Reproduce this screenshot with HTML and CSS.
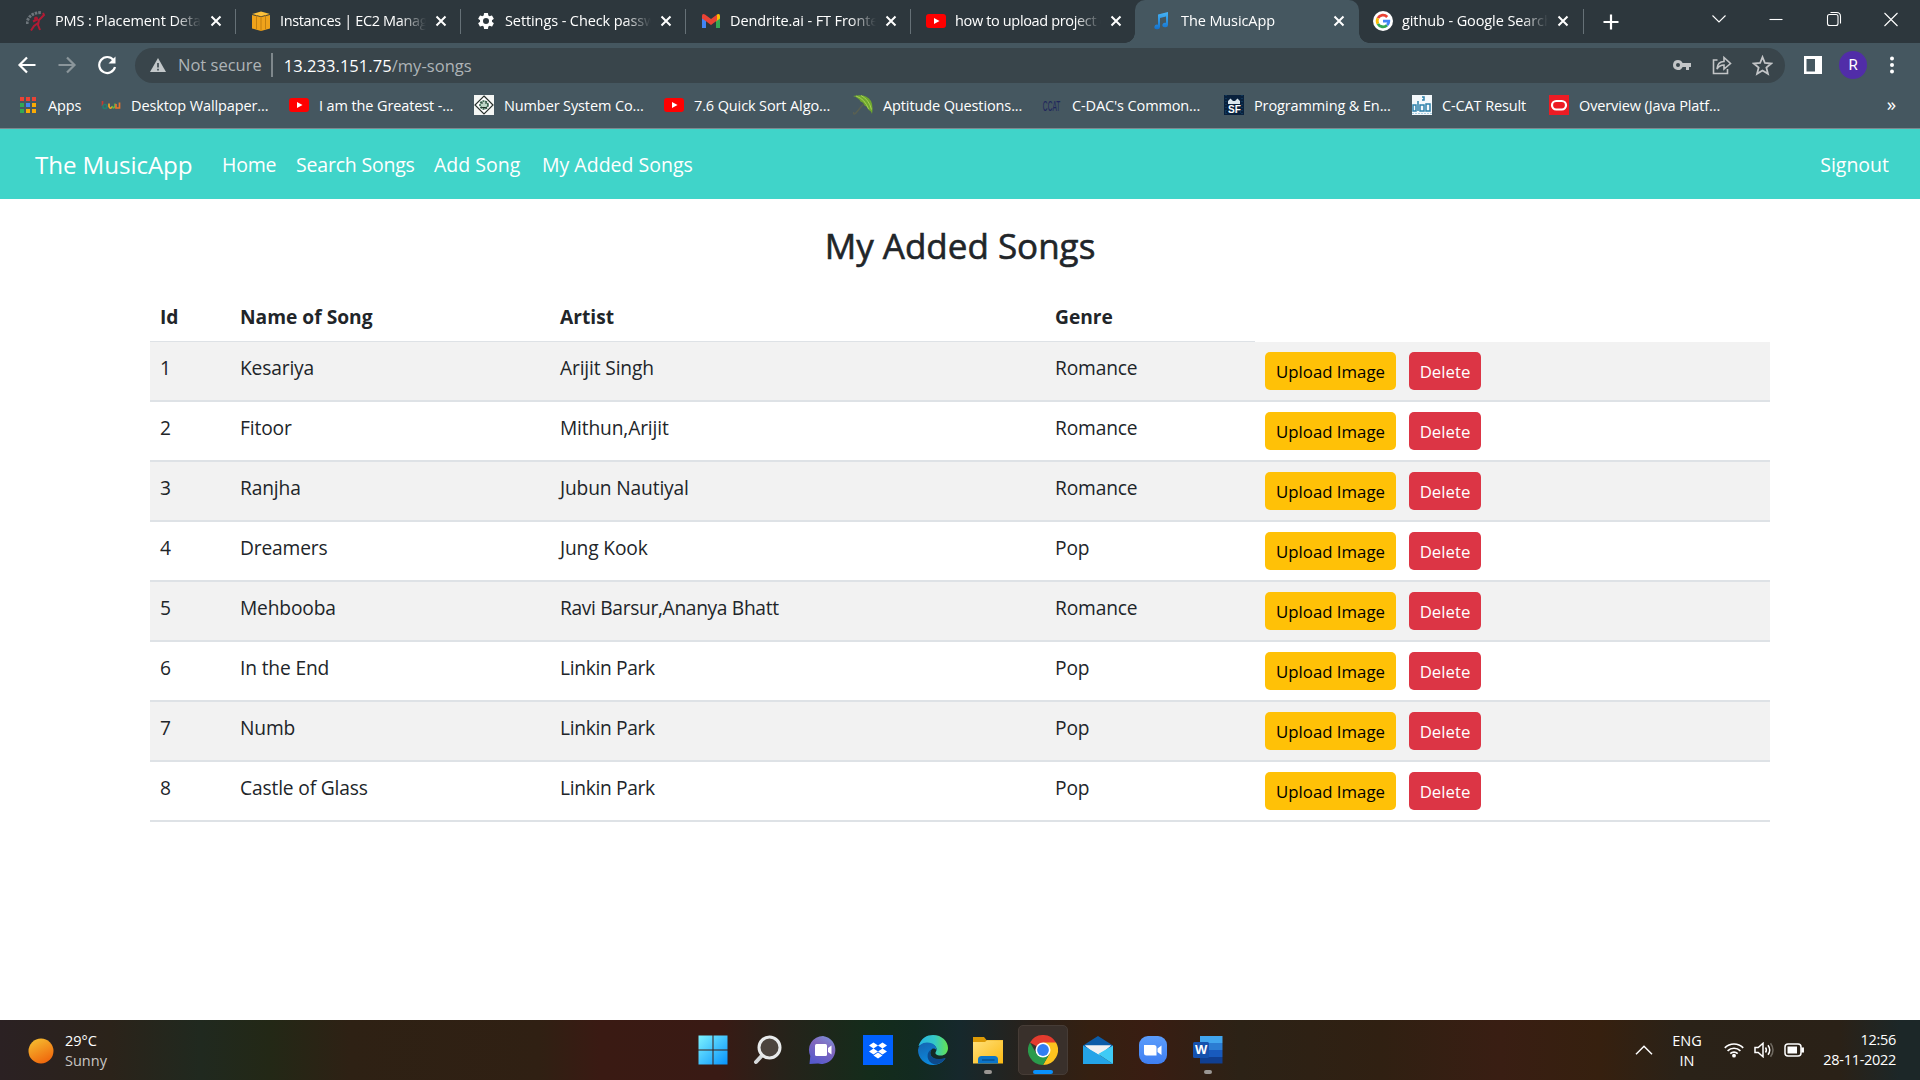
FILE: index.html
```html
<!DOCTYPE html>
<html lang="en">
<head>
<meta charset="utf-8">
<title>The MusicApp</title>
<link rel="stylesheet" href="styles.css">
</head>
<body>
<svg class="defs" aria-hidden="true">
  <defs>
    <symbol id="close" viewBox="0 0 12 12"><path d="M1.5 1.5l9 9M10.5 1.5l-9 9" stroke="#fff" stroke-width="2" fill="none"/></symbol>
    <symbol id="youtube" viewBox="0 0 20 20"><rect y="3" width="20" height="14" rx="3" fill="#f00"/><path d="M8 7l5.5 3L8 13z" fill="#fff"/></symbol>
    <linearGradient id="sun" x1="0.2" y1="0" x2="0.7" y2="1"><stop offset="0" stop-color="#f5bd30"/><stop offset="1" stop-color="#f0640b"/></linearGradient>
    <linearGradient id="win" x1="0" y1="0" x2="1" y2="1"><stop offset="0" stop-color="#7df3ff"/><stop offset="1" stop-color="#0792fb"/></linearGradient>
    <linearGradient id="chat" x1="0.8" y1="0" x2="0.3" y2="1"><stop offset="0" stop-color="#7c8fd8"/><stop offset="0.4" stop-color="#8167bd"/><stop offset="1" stop-color="#5559cc"/></linearGradient>
    <linearGradient id="edgetop"><stop offset="0" stop-color="#25b5e3"/><stop offset="0.55" stop-color="#35c8c6"/><stop offset="1" stop-color="#64e34f"/></linearGradient>
    <linearGradient id="edgelow" x1="0" y1="0" x2="0.5" y2="1"><stop offset="0" stop-color="#1563b0"/><stop offset="1" stop-color="#0b8ce0"/></linearGradient>
    <linearGradient id="folder" x1="0" y1="0" x2="1" y2="1"><stop offset="0" stop-color="#ffe07a"/><stop offset="1" stop-color="#fbb912"/></linearGradient>
    <linearGradient id="zoom" x1="0" y1="0" x2="0" y2="1"><stop offset="0" stop-color="#5a9cfb"/><stop offset="1" stop-color="#3f7ff2"/></linearGradient>
    <linearGradient id="note" x1="0" y1="0" x2="0" y2="1"><stop offset="0" stop-color="#46b4f5"/><stop offset="1" stop-color="#1272cf"/></linearGradient>
  </defs>
</svg>

<header class="browser">
  <div class="tabstrip">
    <div class="tab divided">
      <svg class="favicon" viewBox="0 0 20 20"><path d="M1 13C1 6 7 1.500 15 1.500" stroke="#6d757b" stroke-width="3" stroke-dasharray="2.500 1" fill="none"/><path d="M17 2l1 2-5 5-1 5 2 5M12 8l-5 2.500M12 12l-4 3-3 4.500" stroke="#b21b34" stroke-width="2" fill="none"/><circle cx="10" cy="7.500" r="2" fill="#a91b32"/></svg>
      <span class="tab-title">PMS : Placement Details</span><svg class="close"><use href="#close"/></svg>
    </div>
    <div class="tab divided">
      <svg class="favicon" viewBox="0 0 20 20"><path d="M1 4l9 2v14L1 17.500zM19 4l-9 2v14l9-2.500z" fill="#f0a31b"/><path d="M1 3l9-2.500L19 3l-9 2.200z" fill="#fdc03a"/><path d="M10 5v15M5.500 4v14M14.500 4v14" stroke="#b8770d" stroke-width=".8"/></svg>
      <span class="tab-title tight">Instances | EC2 Management</span><svg class="close"><use href="#close"/></svg>
    </div>
    <div class="tab divided">
      <svg class="favicon" viewBox="0 0 24 24"><path fill="#fff" d="M19.140 12.940c.04-.3.060-.61.060-.94s-.02-.64-.07-.94l2.030-1.580a.5.5 0 0 0 .12-.61l-1.920-3.320a.49.49 0 0 0-.59-.22l-2.390.96a7 7 0 0 0-1.620-.94L14.400 2.810a.48.48 0 0 0-.48-.41h-3.840a.47.47 0 0 0-.47.41l-.36 2.540a7.300 7.300 0 0 0-1.620.94l-2.390-.96a.48.48 0 0 0-.59.22L2.740 8.870a.48.48 0 0 0 .12.610l2.030 1.580a6 6 0 0 0 0 1.880l-2.030 1.580a.5.5 0 0 0-.12.610l1.920 3.320c.12.22.37.29.59.22l2.390-.96c.5.38 1.030.7 1.620.94l.36 2.540c.05.24.24.41.48.41h3.840c.24 0 .44-.17.47-.41l.36-2.540a7 7 0 0 0 1.620-.94l2.390.96c.22.08.47 0 .59-.22l1.920-3.320a.47.47 0 0 0-.12-.61zM12 15.600a3.600 3.600 0 1 1 0-7.200 3.600 3.600 0 0 1 0 7.200z"/></svg>
      <span class="tab-title">Settings - Check passwords</span><svg class="close"><use href="#close"/></svg>
    </div>
    <div class="tab divided">
      <svg class="favicon" viewBox="0 0 20 20"><path d="M1 5v12h4V8.500z" fill="#4285f4"/><path d="M19 5v12h-4V8.500z" fill="#34a853"/><path d="M15 4.500l1.500-1.200Q19 2.500 19 5v2.500L15 10.500z" fill="#fbbc04"/><path d="M1 5q0-3 3-1.500L10 8l6-4.500v6L10 14 5 10.300v-.1L1 7.500z" fill="#ea4335"/></svg>
      <span class="tab-title">Dendrite.ai - FT Frontend</span><svg class="close"><use href="#close"/></svg>
    </div>
    <div class="tab">
      <svg class="favicon"><use href="#youtube"/></svg>
      <span class="tab-title tight">how to upload project on</span><svg class="close"><use href="#close"/></svg>
    </div>
    <div class="tab active">
      <svg class="favicon" viewBox="0 0 20 20"><path d="M6 3.500L16 1v13a2.800 2.300 0 1 1-2-2.200V5.500L8 7v9a2.800 2.300 0 1 1-2-2.300z" fill="url(#note)"/></svg>
      <span class="tab-title">The MusicApp</span><svg class="close"><use href="#close"/></svg>
    </div>
    <div class="tab divided last">
      <svg class="favicon" viewBox="0 0 20 20"><circle cx="10" cy="10" r="10" fill="#fff"/><g fill="none" stroke-width="2.800"><path d="M4.900 7.200A5.800 5.800 0 0 1 14.200 6" stroke="#ea4335"/><path d="M4.900 12.800a5.800 5.800 0 0 1 0-5.600" stroke="#fbbc04"/><path d="M14 14.200a5.800 5.800 0 0 1-9.100-1.400" stroke="#34a853"/><path d="M10 10.200h5.800q0 2.500-1.800 4" stroke="#4285f4"/></g></svg>
      <span class="tab-title">github - Google Search</span><svg class="close"><use href="#close"/></svg>
    </div>
    <svg class="new-tab" viewBox="0 0 16 16"><path d="M8 .5v15M.5 8h15" stroke="#fff" stroke-width="2.200"/></svg>
    <div class="window-controls">
      <svg viewBox="0 0 16 16"><path d="M1.500 4.500L8 11l6.500-6.500" /></svg>
      <svg viewBox="0 0 16 16"><path d="M1.500 8.500h13" /></svg>
      <svg viewBox="0 0 16 16"><rect x="1.500" y="3.500" width="10.500" height="11" rx="2"/><path d="M4.500 1.500h6q4 0 4 4v7"/></svg>
      <svg viewBox="0 0 16 16"><path d="M1.500 2l13 13M14.500 2l-13 13"/></svg>
    </div>
  </div>

  <div class="toolbar">
    <svg class="nav-icon" viewBox="0 0 20 20"><path d="M18.500 10H3M10 2.500L2.500 10l7.500 7.500" stroke="#fff"/></svg>
    <svg class="nav-icon" viewBox="0 0 20 20"><path d="M1.500 10H17M10 2.500l7.500 7.500-7.500 7.500" stroke="#8b969b"/></svg>
    <svg class="nav-icon" viewBox="0 0 20 20"><path d="M16.500 5A8 8 0 1 0 18 12" stroke="#fff"/><path d="M18.500 1.500v7h-7z" fill="#fff"/></svg>
    <div class="omnibox">
      <svg class="warn" viewBox="0 0 16 14"><path d="M8 0l8 14H0z" fill="#c3c8ca"/><path d="M8 5v4.500M8 10.700v1.800" stroke="#39454b" stroke-width="1.600"/></svg>
      <span class="insecure">Not secure</span>
      <span class="url"><b>13.233.151.75</b>/my-songs</span>
      <svg class="omni-icon" viewBox="0 0 20 20"><path d="M6 5a5 5 0 1 0 4.600 7H14v3h3v-3h2V8h-8.400A5 5 0 0 0 6 5zm0 3a2 2 0 1 1 0 4 2 2 0 0 1 0-4z" fill="#c3c5c7" fill-rule="evenodd"/></svg>
      <svg class="omni-icon" viewBox="0 0 20 20"><path d="M5.500 5H1.500v13.500h14V14M5 14q.5-7.500 7-7.500V2.500L18.500 8.500 12 14v-4q-4.500 0-7 4z" fill="none" stroke="#c3c5c7" stroke-width="1.600"/></svg>
      <svg class="omni-icon" viewBox="0 0 20 20"><path d="M10 2l2.300 5.600 6 .5-4.600 3.900 1.500 5.900L10 14.700 4.800 17.900l1.500-5.900L1.700 8.100l6-.5z" fill="none" stroke="#c3c5c7" stroke-width="1.700"/></svg>
    </div>
    <svg class="panel" viewBox="0 0 18 18"><path fill="#fff" fill-rule="evenodd" d="M0 0h18v18H0zM2.500 3v12.500H11V3z"/></svg>
    <span class="avatar">R</span>
    <svg class="dots" viewBox="0 0 6 18"><g fill="#fff"><circle cx="3" cy="2.500" r="2"/><circle cx="3" cy="9" r="2"/><circle cx="3" cy="15.500" r="2"/></g></svg>
  </div>

  <nav class="bookmarks">
    <a><svg viewBox="0 0 20 20"><path d="M2 2h4v4H2zM8 2h4v4H8zM14 2h4v4h-4z" fill="#ea4335"/><path d="M2 8h4v4H2zM2 14h4v4H2z" fill="#34a853"/><path d="M8 8h4v4H8z" fill="#4285f4"/><path d="M14 8h4v4h-4zM8 14h4v4H8zM14 14h4v4h-4z" fill="#fbab04"/></svg>Apps</a>
    <a><svg viewBox="0 0 20 20"><g fill="none" stroke-width="1.700"><path d="M1.500 6v5" stroke="#c33c31"/><circle cx="4" cy="11.500" r="2" stroke="#237d6f"/><path d="M8 8.500v3q1.500 3.500 3 0" stroke="#f4a124"/><path d="M11 11q1.500 4 3 0V8.500" stroke="#62b34a"/><path d="M15 9v4h3.500V7.500" stroke="#e8742c"/></g></svg>Desktop Wallpaper...</a>
    <a><svg><use href="#youtube"/></svg>I am the Greatest -...</a>
    <a><svg viewBox="0 0 20 20"><path d="M0 0h20v20H0z" fill="#f4f6f4"/><path d="M10 1l9 9-9 9-9-9z" fill="#fff" stroke="#27302c" stroke-width="1.200"/><circle cx="10" cy="10" r="4" fill="#bdd6c7" stroke="#2f5d46" stroke-width="1.600" stroke-dasharray="2 .8"/><path d="M7 8h2M11 8h2M7 12q3 2 6 0" stroke="#253b30"/></svg>Number System Co...</a>
    <a><svg><use href="#youtube"/></svg>7.6 Quick Sort Algo...</a>
    <a><svg viewBox="0 0 20 20"><path d="M.5 17q0 3 2 1.500L13 6" stroke="#596052" stroke-width="1.500" fill="none"/><path d="M0 1Q13-2 18 6q2.500 5 1 13-1-3.500-3.500-4-.5-3.500-4-4.500-.5-3-4-4Q6 3 0 1z" fill="#6fa82e"/><path d="M3 1q9 3 12.500 13M8 0.500q8 4 10.500 14" stroke="#a6cf55" fill="none"/></svg>Aptitude Questions...</a>
    <a><svg viewBox="0 0 20 20"><text class="ccat" transform="scale(.44 1)" x="2" y="16">CCAT</text></svg>C-DAC's Common...</a>
    <a><svg viewBox="0 0 20 20"><path d="M0 0h20v20H0z" fill="#09213d"/><path d="M2 0v20M18 0v20M1 17h18" stroke="#164e76" stroke-dasharray="1 2"/><path d="M4 9V6l2.500-2.500L9 6h2l2.500-2.500L16 6v3z" fill="#d9e5ed"/><text class="sf" x="4" y="17.500">SF</text></svg>Programming &amp; En...</a>
    <a><svg viewBox="0 0 20 20"><path d="M0 0h20v20H0z" fill="#f3f8fb"/><path d="M1 10h3v6H1zM6 6v10M8 10h4v6H8zM14 9h4v7h-4zM10 2h2v3h-2" fill="none" stroke="#2d80aa" stroke-width="1.500"/><path d="M0 18.500h20" stroke="#a9cfe2" stroke-dasharray="2 1"/></svg>C-CAT Result</a>
    <a><svg viewBox="0 0 20 20"><path d="M0 0h20v20H0z" fill="#ed1c24"/><rect x="3" y="6" width="14" height="8.500" rx="4.200" fill="none" stroke="#fff" stroke-width="2.200"/></svg>Overview (Java Platf...</a>
    <span class="more">»</span>
  </nav>
</header>

<main class="app">
  <nav class="navbar">
    <a class="brand">The MusicApp</a>
    <a class="n1">Home</a><a class="n2">Search Songs</a><a class="n3">Add Song</a><a class="n4">My Added Songs</a>
    <a class="signout">Signout</a>
  </nav>
  <h2>My Added Songs</h2>
  <table>
    <colgroup><col class="c-id"><col class="c-name"><col class="c-artist"><col class="c-genre"><col></colgroup>
    <thead><tr><th>Id</th><th>Name of Song</th><th>Artist</th><th>Genre</th></tr></thead>
    <tbody>
      <tr><td>1</td><td>Kesariya</td><td>Arijit Singh</td><td>Romance</td><td><div class="actions"><button class="btn warning">Upload Image</button><button class="btn danger">Delete</button></div></td></tr>
      <tr><td>2</td><td>Fitoor</td><td>Mithun,Arijit</td><td>Romance</td><td><div class="actions"><button class="btn warning">Upload Image</button><button class="btn danger">Delete</button></div></td></tr>
      <tr><td>3</td><td>Ranjha</td><td>Jubun Nautiyal</td><td>Romance</td><td><div class="actions"><button class="btn warning">Upload Image</button><button class="btn danger">Delete</button></div></td></tr>
      <tr><td>4</td><td>Dreamers</td><td>Jung Kook</td><td>Pop</td><td><div class="actions"><button class="btn warning">Upload Image</button><button class="btn danger">Delete</button></div></td></tr>
      <tr><td>5</td><td>Mehbooba</td><td class="long">Ravi Barsur,Ananya Bhatt</td><td>Romance</td><td><div class="actions"><button class="btn warning">Upload Image</button><button class="btn danger">Delete</button></div></td></tr>
      <tr><td>6</td><td>In the End</td><td class="long">Linkin Park</td><td>Pop</td><td><div class="actions"><button class="btn warning">Upload Image</button><button class="btn danger">Delete</button></div></td></tr>
      <tr><td>7</td><td>Numb</td><td class="long">Linkin Park</td><td>Pop</td><td><div class="actions"><button class="btn warning">Upload Image</button><button class="btn danger">Delete</button></div></td></tr>
      <tr><td>8</td><td>Castle of Glass</td><td class="long">Linkin Park</td><td>Pop</td><td><div class="actions"><button class="btn warning">Upload Image</button><button class="btn danger">Delete</button></div></td></tr>
    </tbody>
  </table>
</main>

<footer class="taskbar">
  <div class="weather">
    <svg viewBox="0 0 26 26"><circle cx="13" cy="13" r="12.500" fill="url(#sun)"/></svg>
    <div><div>29°C</div><div class="dim">Sunny</div></div>
  </div>
  <div class="pinned">
    <span class="pin"><svg viewBox="0 0 30 30"><path d="M.5.5h14v14H.5zM15.500.5h14v14h-14zM.5 15.500h14v14H.5zM15.500 15.500h14v14h-14z" fill="url(#win)"/></svg></span>
    <span class="pin"><svg viewBox="0 0 30 30"><path d="M9 20.500L3 27" stroke="#d5d8da" stroke-width="4" stroke-linecap="round"/><circle cx="16.500" cy="12.500" r="10.500" fill="#4c443e" stroke="#e8eaeb" stroke-width="3"/></svg></span>
    <span class="pin"><svg viewBox="0 0 30 30"><path d="M15 1a14 14 0 1 1-5 27.500L1.500 29l.8-8A14 14 0 0 1 15 1z" fill="url(#chat)"/><rect x="7" y="9" width="12" height="12" rx="1.500" fill="#fff"/><path d="M20 13l3.500-2.500v9L20 17z" fill="#fff"/></svg></span>
    <span class="pin"><svg viewBox="0 0 30 30"><path d="M0 0h30v30H0z" fill="#0061fe"/><path d="M10.500 7.500l4.500 3-4.500 3-4.500-3zM19.500 7.500l4.500 3-4.500 3-4.500-3zM10.500 13.500l4.500 3-4.500 3-4.500-3zM19.500 13.500l4.500 3-4.500 3-4.500-3zM15 17.500l4.500 3-4.500 3-4.500-3z" fill="#fff"/></svg></span>
    <span class="pin"><svg viewBox="0 0 30 30"><path d="M.5 11C3 3 9 0 15 0c9 0 15 6.500 15 13 0 5-3.500 7.500-7 7.500-5 0-6.500-2-5-4 2-3-1-7.500-6-7.500Q4 9 .5 11z" fill="url(#edgetop)"/><path d="M0 15Q1 7.500 9 7.500c7 0 10 4.500 9.500 8-1-2-3-2.500-4.500-1.500-5 5 1 14 13.500 9C25 27.500 20 30 15 30 6.500 30 0 23 0 15z" fill="url(#edgelow)"/><path d="M14 14c-4.500 5 0 12.500 13.500 9-2 4-7 6.500-11 6.500C8 27 7.500 17 14 14z" fill="#0d4a8c"/></svg></span>
    <span class="pin"><svg viewBox="0 0 30 30"><path d="M0 2h11l2.500 3H30v6H0z" fill="#dc9a06"/><path d="M0 7h12l2-1.700h16V28.500H0z" fill="url(#folder)"/><path d="M5 28.500v-4q0-3.500 3.500-3.500h13q3.500 0 3.500 3.500v4z" fill="#0b75c9"/><path d="M9 25h12.500" stroke="#064984" stroke-width="1.200"/></svg><i class="running"></i></span>
    <span class="pin current"><svg viewBox="0 0 30 30"><path d="M15 15L2 7.500A15 15 0 0 1 28 7.500z" fill="#e33b2e"/><path d="M15 7.500h13A15 15 0 0 1 15 30l6.500-11.200z" fill="#fcc31e"/><path d="M2 7.500A15 15 0 0 0 15 30l6.500-11.200L8.500 18.800z" fill="#2a9b4b"/><circle cx="15" cy="15" r="7.500" fill="#fff"/><circle cx="15" cy="15" r="5.900" fill="#327ef3"/></svg><i class="running"></i></span>
    <span class="pin"><svg viewBox="0 0 30 30"><path d="M0 10.500L15 1l15 9.500-3 7H3z" fill="#0b5ca8"/><path d="M2 10.500h26L15 22z" fill="#f0f1f2"/><path d="M0 10.500l15 8.500L30 29H0z" fill="#24a4e8"/><path d="M30 10.500V29L15 19z" fill="#3fcbf6"/><path d="M2 10.500h26L15 19z" fill="#f0f1f2"/></svg></span>
    <span class="pin"><svg viewBox="0 0 30 30"><rect x="1" y="1" width="28" height="28" rx="9" fill="url(#zoom)"/><path d="M6 10h10q2.500 0 2.500 2.500V20.500H8.500Q6 20.500 6 18zM19.500 13.500L23.500 10.500v9.500L19.500 17z" fill="#fff"/></svg></span>
    <span class="pin"><svg viewBox="0 0 30 30"><path d="M7 1h22.500v7H7z" fill="#41a5ee"/><path d="M7 8h22.500v7H7z" fill="#2b7cd3"/><path d="M7 15h22.500v7H7z" fill="#185abd"/><path d="M7 22h22.500v6.500H7z" fill="#103f91"/><rect y="7" width="16" height="16" rx="1.500" fill="#1551ad"/><text class="word" x="2" y="19">W</text></svg><i class="running"></i></span>
  </div>
  <div class="tray">
    <svg class="t-chev" viewBox="0 0 18 10"><path d="M1 9.300L9 1.300l8 8"/></svg>
    <div class="lang">ENG<br>IN</div>
    <svg class="t-wifi" viewBox="0 0 20 16"><g stroke-width="1.700"><path d="M.8 5.800a13 13 0 0 1 18.400 0M3.600 8.900a9 9 0 0 1 12.800 0M6.300 11.700a5.200 5.200 0 0 1 7.400 0"/></g><circle cx="10" cy="13.700" r="1.900" fill="#fff" stroke="none"/></svg>
    <svg class="t-vol" viewBox="0 0 20 16"><path d="M1 5.500h3.200L9 1.300v13.400l-4.800-4.200H1z"/><path d="M11.500 5.500q1.800 2.500 0 5M14 3.200q3.500 4.800 0 9.600"/><path d="M16.500 1.200q5 6.800 0 13.600" stroke="#6f6960"/></svg>
    <svg class="t-bat" viewBox="0 0 20 14"><rect x="1" y="1" width="16" height="12" rx="3"/><path d="M18 5.200h1.200v3.600H18z" fill="#fff"/><rect x="3.500" y="3.500" width="9.500" height="7" fill="#fff" stroke="none"/></svg>
    <div class="clock">12:56<br>28-11-2022</div>
  </div>
</footer>
</body>
</html>
```
FILE: styles.css
```css
* { box-sizing: border-box; }
body {
  margin: 0;
  width: 1920px;
  height: 1080px;
  display: flex;
  flex-direction: column;
  overflow: hidden;
  background: #fff;
  color: #212529;
  font-family: "Open Sans", "Noto Sans", sans-serif;
}
svg { display: block; flex: none; }
.defs { width: 0; height: 0; position: absolute; }

/* Browser frame */
.browser {
  flex: none;
  height: 129px;
  background: #455760;
  border-bottom: 1px solid #7b898f;
  color: #fff;
}
.tabstrip {
  height: 43px;
  padding-left: 11px;
  background: #2d373d;
  display: flex;
  align-items: center;
}
.tab {
  position: relative;
  width: 225px;
  height: 43px;
  padding: 0 14px 2px 15px;
  display: flex;
  align-items: center;
  font-size: 14.500px;
  letter-spacing: -0.1px;
}
.tab.divided::after {
  content: "";
  position: absolute;
  right: 0;
  top: 9px;
  width: 1px;
  height: 25px;
  background: #667177;
}
.tab.active {
  width: 224px;
  margin-left: -1px;
  padding-left: 17px;
  background: #455760;
  border-radius: 10px 10px 0 0;
}
.tab.active .close { margin-left: 8px; }
.tab.last { padding-left: 14px; width: 225px; }
.tab.active::before, .tab.active::after {
  content: "";
  position: absolute;
  bottom: 0;
  width: 10px;
  height: 10px;
}
.tab.active::before { left: -10px; background: radial-gradient(circle at 0 0, transparent 9.500px, #455760 10px); }
.tab.active::after { right: -10px; background: radial-gradient(circle at 100% 0, transparent 9.500px, #455760 10px); }
.favicon { width: 20px; height: 20px; margin-right: 9px; }
.tab-title {
  width: 146px;
  overflow: hidden;
  white-space: nowrap;
  line-height: 24px;
  -webkit-mask-image: linear-gradient(90deg, #000 120px, transparent 146px);
  mask-image: linear-gradient(90deg, #000 120px, transparent 146px);
}
.tab-title.tight { letter-spacing: -0.35px; }
.close { width: 12px; height: 12px; margin-left: 9px; }
.new-tab { width: 16px; height: 16px; margin-left: 19px; }
.window-controls {
  margin: -5px 21px 0 auto;
  display: flex;
  gap: 41.300px;
}
.window-controls svg { width: 16px; height: 16px; fill: none; stroke: #fff; stroke-width: 1.100; }

.toolbar {
  height: 44px;
  padding-left: 17px;
  display: flex;
  align-items: center;
}
.nav-icon { width: 20px; height: 20px; margin-right: 20px; fill: none; stroke-width: 2.200; }
.omnibox {
  width: 1650px;
  height: 35px;
  margin: 1px 0 0 -2px;
  padding: 0 12px 1px 15px;
  border-radius: 18px;
  background: #39454b;
  display: flex;
  align-items: center;
  font-size: 16.500px;
}
.warn { width: 16px; height: 14px; margin-right: 12px; }
.insecure {
  color: #aeb4b7;
  padding-right: 9px;
  margin-right: 11px;
  line-height: 24px;
  border-right: 2px solid #7f888c;
}
.url { color: #aeb4b7; flex: 1; letter-spacing: 0.05px; }
.url b { color: #fff; font-weight: 400; }
.omni-icon { width: 20px; height: 20px; margin-left: 20px; }
.omni-icon:last-child { width: 21px; height: 21px; }
.panel { width: 18px; height: 18px; margin-left: 19px; }
.avatar {
  width: 28px;
  height: 28px;
  margin-left: 17px;
  border-radius: 50%;
  background: #512da8;
  display: grid;
  place-items: center;
  font: 15px Roboto, sans-serif;
}
.dots { width: 6px; height: 18px; margin-left: 22px; }

.bookmarks {
  height: 36px;
  padding: 0 24px 0 18px;
  display: grid;
  grid-template-columns: 83px 188px 185px 190px 189px 189px 182px 188px 137px 1fr auto;
  align-items: center;
  font-size: 14.500px;
  letter-spacing: -0.12px;
  white-space: nowrap;
}
.bookmarks a { display: flex; align-items: center; gap: 10px; }
.bookmarks svg { width: 20px; height: 20px; }
.ccat { font: 15px "Liberation Sans", sans-serif; fill: #20265c; letter-spacing: 0; }
.sf { font: bold 10px "Liberation Sans", sans-serif; fill: #fff; letter-spacing: 0; }
.more { font-size: 19px; line-height: 20px; margin-top: -3px; }

/* Application page */
.app { flex: 1; min-height: 0; }
.navbar {
  height: 70px;
  padding: 1px 31px 0 35px;
  background: #40d4c9;
  color: #fff;
  display: flex;
  align-items: center;
  font-size: 19.500px;
  white-space: nowrap;
}
.brand { width: 187px; font-size: 24.200px; letter-spacing: -0.1px; }
.n1 { width: 74px; letter-spacing: -0.2px; }
.n2 { width: 138px; letter-spacing: -0.2px; }
.n3 { width: 108px; }
.signout { margin-left: auto; }
h2 {
  margin: 25px 0;
  text-align: center;
  font-size: 35px;
  font-weight: 500;
  line-height: 43px;
  -webkit-text-stroke: 0.6px #212529;
}
table {
  width: 1620px;
  margin: 0 auto;
  table-layout: fixed;
  border-spacing: 0;
  font-size: 19.200px;
  line-height: 30px;
  letter-spacing: -0.15px;
}
.c-id { width: 80px; }
.c-name { width: 320px; }
.c-artist { width: 495px; }
.c-genre { width: 210px; }
th {
  height: 50px;
  padding: 10px 10px 9px;
  text-align: left;
  font-weight: 700;
  letter-spacing: 0;
  border-bottom: 1px solid #dee2e6;
}
td {
  height: 60px;
  padding: 11px 10px 7px;
  vertical-align: top;
  border-bottom: 2px solid #dee2e6;
}
td:last-child { padding-top: 10px; }
td.long { letter-spacing: -0.33px; }
tbody tr:nth-child(odd) { background: #f2f2f2; }
.actions { display: flex; gap: 13px; }
.btn {
  height: 38px;
  padding: 0;
  border: 0;
  border-radius: 5px;
  font: 16.800px "Open Sans", sans-serif;
}
.warning { width: 131px; background: #ffc107; color: #000; }
.danger { width: 72px; background: #dc3545; color: #fff; }

/* Taskbar */
.taskbar {
  flex: none;
  height: 60px;
  background: linear-gradient(90deg, #2b2123 0, #2b231a 110px, #20291f 200px, #232816 270px, #2e2114 350px, #302013 540px, #3a1a13 600px, #391a14 720px, #27221a 780px, #142c1b 870px, #122a20 915px, #16282c 960px, #29211b 1030px, #352011 1090px, #391d12 1150px, #2c2216 1240px, #302012 1380px, #391e13 1500px, #36200f 1600px, #2a2218 1680px, #2a2117 1840px, #1c2728 1900px);
  color: #fff;
  display: flex;
  align-items: center;
  font-size: 14.500px;
  line-height: 20px;
}
.weather { width: 688px; padding: 1px 0 0 28px; display: flex; align-items: center; gap: 11px; }
.weather svg { width: 26px; height: 26px; }
.dim { color: #c8c6c4; }
.pinned { display: flex; gap: 5px; }
.pin {
  position: relative;
  width: 50px;
  height: 50px;
  border-radius: 5px;
  display: grid;
  place-items: center;
}
.pin svg { width: 30px; height: 30px; }
.current { background: #39302b; border: 1px solid #463c36; }
.running {
  position: absolute;
  bottom: 1px;
  left: 50%;
  width: 8px;
  height: 4px;
  margin-left: -4px;
  border-radius: 2px;
  background: #9a9693;
}
.current .running { width: 20px; margin-left: -10px; bottom: 0; background: #0a91fb; }
.word { font: bold 13px "Liberation Sans", sans-serif; fill: #fff; }
.tray { flex: 1; display: flex; align-items: center; padding-right: 24px; justify-content: flex-end; }
.tray svg { fill: none; stroke: #fff; stroke-width: 1.500; }
.t-chev { width: 18px; height: 10px; }
.lang { width: 30px; margin-left: 19px; padding-top: 1px; text-align: center; }
.t-wifi { width: 20px; height: 16px; margin-left: 22px; }
.t-vol { width: 20px; height: 16px; margin-left: 10px; }
.t-bat { width: 20px; height: 14px; margin-left: 10px; }
.clock { width: 92px; text-align: right; letter-spacing: -0.3px; }
```
